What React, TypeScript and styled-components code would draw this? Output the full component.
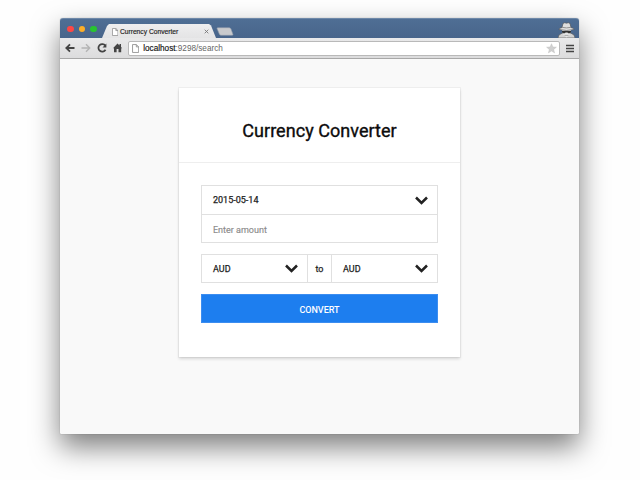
import React from 'react';
import styled, { createGlobalStyle } from 'styled-components';

const GlobalStyle = createGlobalStyle`
  * { box-sizing: border-box; }
  body { margin: 0; background: #fff; overflow: hidden; }
`;

const Desktop = styled.div`
  width: 640px;
  height: 480px;
  padding: 18px 61px 0 60px;
  background: #fefefe;
`;

const BrowserWindow = styled.section`
  display: flex;
  flex-direction: column;
  height: 416px;
  border-radius: 3px 3px 1px 1px;
  background: #f9f9f9;
  box-shadow: 0 0 1px rgba(0, 0, 0, 0.4), 0 13px 28px rgba(0, 0, 0, 0.5);
`;

const TitleBar = styled.header`
  display: flex;
  align-items: flex-end;
  height: 20px;
  padding-right: 4px;
  border-radius: 3px 3px 0 0;
  border-top: 1px solid #6e88a8;
  background: linear-gradient(#4f6e94, #48658b);
`;

const TrafficLights = styled.div`
  display: flex;
  gap: 5px;
  width: 42px;
  padding-left: 7px;
  margin-bottom: 6px;
`;

const Light = styled.span<{ $color: string }>`
  width: 6.5px;
  height: 6.5px;
  border-radius: 50%;
  background: ${({ $color }) => $color};
`;

const Tab = styled.div`
  display: flex;
  align-items: center;
  width: 114px;
  height: 14px;
  padding: 1px 7px 0 9.5px;
  clip-path: polygon(0 100%, 5px 14%, 7px 0, 107px 0, 109px 10%, 100% 100%);
  background: linear-gradient(#eeeeef, #e4e4e5);
`;

const TabTitle = styled.span`
  flex: 1;
  margin-left: 2px;
  font: 6.7px/12px 'Liberation Sans', sans-serif;
  color: #222;
  white-space: nowrap;
  -webkit-text-stroke: 0.15px #222;
`;

const NewTab = styled.svg`
  width: 18px;
  height: 9px;
  margin: 0 0 2px 0;
`;

const Incognito = styled.svg`
  width: 17px;
  height: 16px;
  margin-left: auto;
`;

const Toolbar = styled.nav`
  display: flex;
  align-items: center;
  height: 21px;
  padding: 0 5px 0 4px;
  border-bottom: 1px solid #a8a8a8;
  background: linear-gradient(#e9e9ea, #dcdcdd);
`;

const ToolIcon = styled.svg`
  flex: none;
  width: 12px;
  height: 12px;
  margin-right: 4px;
  fill: none;
  stroke: #444;
  stroke-width: 1.8;
`;

const Address = styled.div`
  display: flex;
  align-items: center;
  flex: 1;
  height: 15px;
  padding: 0 2px 0 3px;
  border: 1px solid #b9b9b9;
  border-radius: 2px;
  background: #fff;
`;

const Url = styled.span`
  flex: 1;
  margin-left: 4px;
  padding-top: 2px;
  font: 8.2px/12px 'Liberation Sans', sans-serif;
  color: #666;
`;

const Host = styled.span`
  color: #111;
  -webkit-text-stroke: 0.15px #111;
`;

const StarIcon = styled.svg`
  width: 11px;
  height: 11px;
`;

const MenuIcon = styled.svg`
  width: 8px;
  height: 9px;
  margin-left: 6px;
`;

const Page = styled.main`
  flex: 1;
  padding: 29px 0 0 119px;
  font-family: Roboto, sans-serif;
`;

const Card = styled.article`
  width: 281px;
  height: 269px;
  background: #fff;
  box-shadow: 0 0 0 1px rgba(0, 0, 0, 0.04), 0 2px 3px rgba(0, 0, 0, 0.14);
`;

const CardHeader = styled.header`
  height: 75px;
  padding-top: 30px;
  border-bottom: 1px solid #eee;
`;

const Title = styled.h1`
  margin: 0;
  font-size: 18px;
  line-height: 26px;
  font-weight: 400;
  letter-spacing: 0.04px;
  text-align: center;
  color: #0c0c0c;
  -webkit-text-stroke: 0.35px #0c0c0c;
`;

const Form = styled.form`
  display: flex;
  flex-direction: column;
  gap: 11px;
  padding: 22px 22px 0;
`;

const FieldGroup = styled.div<{ $columns?: string; $rows: string }>`
  display: grid;
  grid-template-columns: ${({ $columns }) => $columns ?? '1fr'};
  grid-template-rows: ${({ $rows }) => $rows};
  border: 1px solid #e0e0e0;
`;

const Field = styled.div<{ $divider?: 'right' | 'bottom'; $muted?: boolean }>`
  display: flex;
  align-items: center;
  justify-content: space-between;
  padding: ${({ $muted }) => ($muted ? 2 : 0)}px 9px 0 11px;
  border: 0 solid #e0e0e0;
  border-right-width: ${({ $divider }) => ($divider === 'right' ? 1 : 0)}px;
  border-bottom-width: ${({ $divider }) => ($divider === 'bottom' ? 1 : 0)}px;
  font-size: 9px;
  line-height: 12px;
  color: ${({ $muted }) => ($muted ? '#8c8c8c' : '#1c1c1c')};
  -webkit-text-stroke: ${({ $muted }) => ($muted ? '0.15px #8c8c8c' : '0.25px #1c1c1c')};
`;

const Joiner = styled(Field)`
  justify-content: center;
  padding: 0;
`;

const ChevronIcon = styled.svg`
  width: 13px;
  height: 9px;
  fill: none;
  stroke: #222;
  stroke-width: 2.5;
`;

const ConvertButton = styled.button`
  height: 29px;
  padding: 2px 0 0;
  border: 1px solid #3c8df0;
  background: #1d7eef;
  color: #fff;
  font: 500 9px/12px Roboto, sans-serif;
`;

const Chevron = () => (
  <ChevronIcon viewBox="0 0 13 9">
    <path d="M1 1.5 6.5 7 12 1.5" />
  </ChevronIcon>
);

const PageIcon = ({ size }: { size: number }) => (
  <svg width={size * 0.8} height={size} viewBox="0 0 8 10" fill="#fff" stroke="#888" strokeWidth="0.9">
    <path d="M.6.6H4.8L7.4 3.2V9.4H.6ZM4.8.6V3.2H7.4" />
  </svg>
);

export default function App() {
  return (
    <>
      <GlobalStyle />
      <Desktop>
        <BrowserWindow>
          <TitleBar>
            <TrafficLights>
              <Light $color="#fc4745" />
              <Light $color="#fdae27" />
              <Light $color="#28c331" />
            </TrafficLights>
            <Tab>
              <PageIcon size={8} />
              <TabTitle>Currency Converter</TabTitle>
              <svg width="5" height="5" viewBox="0 0 5 5" stroke="#777" strokeWidth="0.9">
                <path d="M.7.7 4.3 4.3M4.3.7.7 4.3" />
              </svg>
            </Tab>
            <NewTab viewBox="0 0 18 9">
              <path d="M1.5.7H13Q14.5.7 15 2L17 7.5Q17.2 8.3 16 8.3H5Q3.8 8.3 3.3 7L1 1.5Z" fill="#c9cacd" stroke="#8e9baa" strokeWidth=".6" />
            </NewTab>
            <Incognito viewBox="0 0 17 16">
              <path d="M0 16Q0 12.5 3.5 11.5L13.5 11.5Q17 12.5 17 16Z" fill="#d2d2d2" stroke="#4b4b4b" strokeWidth=".6" />
              <path d="M4 7H13L12.4 12 8.5 15.5 4.6 12Z" fill="#e6e6e6" />
              <path d="M4 5.5 5 1.5Q6.5.2 8.5 1.2 10.5.2 12 1.5L13 5.5Q16.5 6.5 16 7.5 8.5 9.5 1 7.5 .5 6.5 4 5.5Z" fill="#dedede" stroke="#4b4b4b" strokeWidth=".6" />
              <path d="M4 5.3Q8.5 6.5 13 5.3" stroke="#8a8a8a" strokeWidth=".9" fill="none" />
              <path d="M4 9H13V10.4L11 11.6 9.2 10.4H7.8L6 11.6 4 10.4Z" fill="#333" />
              <path d="M6.5 13.4H10.5" stroke="#999" strokeWidth=".8" />
            </Incognito>
          </TitleBar>
          <Toolbar>
            <ToolIcon viewBox="0 0 12 12">
              <path d="M10.5 6H2.5M6 2.3 2.3 6 6 9.7" />
            </ToolIcon>
            <ToolIcon viewBox="0 0 12 12">
              <path d="M1.5 6H9.5M6 2.3 9.7 6 6 9.7" stroke="#b4b4b4" strokeWidth="1.4" />
            </ToolIcon>
            <ToolIcon viewBox="0 0 12 12">
              <path d="M9.3 3.6A3.8 3.8 0 1 0 9.5 7.8" />
              <path d="M10.4 1.5V5.4H6.5Z" fill="#444" stroke="none" />
            </ToolIcon>
            <ToolIcon viewBox="0 0 12 12">
              <path d="M1 6.2 5.5 1.5 7.5 3.5V2H9V5L10.2 6.2H9.2V10.3H6.5V7H4.6V10.3H2V6.2Z" fill="#444" stroke="none" />
            </ToolIcon>
            <Address>
              <PageIcon size={9} />
              <Url><Host>localhost</Host>:9298/search</Url>
              <StarIcon viewBox="0 0 11 11">
                <path d="M5.5.7 6.9 4 10.4 4.2 7.7 6.4 8.6 9.9 5.5 8 2.4 9.9 3.3 6.4.6 4.2 4.1 4Z" fill="#d0d0d0" stroke="#bbb" strokeWidth=".4" />
              </StarIcon>
            </Address>
            <MenuIcon viewBox="0 0 8 9">
              <path d="M0 1.5H8M0 4.5H8M0 7.5H8" stroke="#444" strokeWidth="1.6" />
            </MenuIcon>
          </Toolbar>
          <Page>
            <Card>
              <CardHeader>
                <Title>Currency Converter</Title>
              </CardHeader>
              <Form>
                <FieldGroup $rows="29px 27px">
                  <Field $divider="bottom">2015-05-14<Chevron /></Field>
                  <Field $muted>Enter amount</Field>
                </FieldGroup>
                <FieldGroup $rows="27px" $columns="106px 24px 1fr">
                  <Field $divider="right">AUD<Chevron /></Field>
                  <Joiner $divider="right">to</Joiner>
                  <Field>AUD<Chevron /></Field>
                </FieldGroup>
                <ConvertButton type="button">CONVERT</ConvertButton>
              </Form>
            </Card>
          </Page>
        </BrowserWindow>
      </Desktop>
    </>
  );
}
